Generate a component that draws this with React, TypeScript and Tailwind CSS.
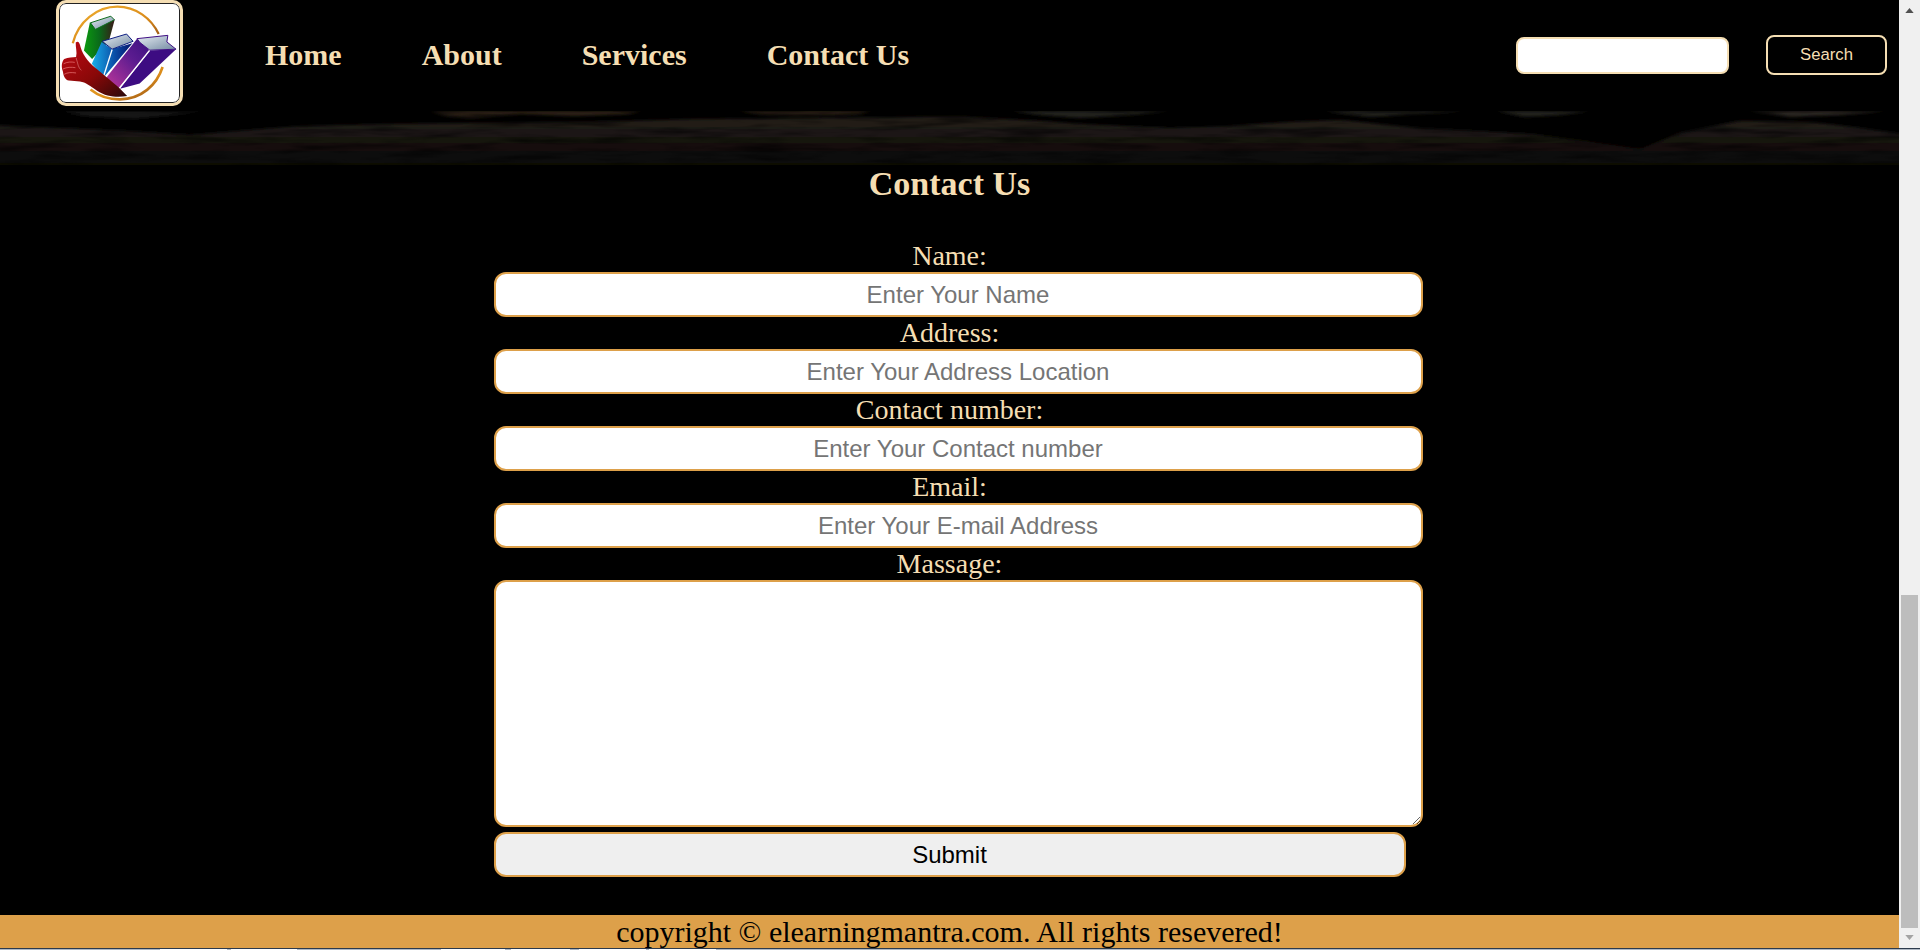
import React from "react";

function Logo() {
  return (
    <svg viewBox="57 9 363 297" className="block w-full h-full" preserveAspectRatio="none">
      <defs>
        <linearGradient id="ring" x1="0" y1="0" x2="1" y2="1">
          <stop offset="0" stopColor="#f0b030" />
          <stop offset="0.6" stopColor="#d98a1a" />
          <stop offset="1" stopColor="#8a4a14" />
        </linearGradient>
        <linearGradient id="green" x1="0" y1="0" x2="1" y2="0">
          <stop offset="0" stopColor="#0c9a10" />
          <stop offset="0.5" stopColor="#0a6a1a" />
          <stop offset="1" stopColor="#3a1818" />
        </linearGradient>
        <linearGradient id="blue" x1="0" y1="0" x2="1" y2="0">
          <stop offset="0" stopColor="#18aeea" />
          <stop offset="0.55" stopColor="#0a50a8" />
          <stop offset="1" stopColor="#04106a" />
        </linearGradient>
        <linearGradient id="mag" x1="0" y1="1" x2="1" y2="0">
          <stop offset="0" stopColor="#c0389a" />
          <stop offset="0.6" stopColor="#5c1c90" />
          <stop offset="1" stopColor="#3a1080" />
        </linearGradient>
        <linearGradient id="page" x1="0" y1="0" x2="1" y2="1">
          <stop offset="0" stopColor="#e8eef4" />
          <stop offset="1" stopColor="#7088a0" />
        </linearGradient>
        <linearGradient id="hand" x1="0" y1="0" x2="1" y2="1">
          <stop offset="0" stopColor="#c00a14" />
          <stop offset="0.55" stopColor="#8a0808" />
          <stop offset="1" stopColor="#2a0a0a" />
        </linearGradient>
      </defs>
      <path d="M96 128C112 62 170 17 232 17C288 17 335 52 358 100" fill="none" stroke="url(#ring)" strokeWidth="7" />
      <path d="M370 200C352 255 305 297 240 298C205 298 175 288 150 268" fill="none" stroke="url(#ring)" strokeWidth="8" />
      <path d="M148 66L224 56L206 122L155 176L130 150Z" fill="url(#green)" />
      <path d="M150 66L212 46L223 57L165 86Z" fill="url(#page)" stroke="#0a6a1a" strokeWidth="3" />
      <path d="M184 124L154 190L190 232L278 128L215 145Z" fill="url(#blue)" />
      <path d="M186 122L260 100L280 122L216 146Z" fill="url(#page)" stroke="#0a1a80" strokeWidth="3" />
      <path d="M216 147L190 228" stroke="#ffffff" strokeWidth="4" fill="none" />
      <path d="M292 114L195 236L236 264L330 150Z" fill="url(#mag)" />
      <path d="M331 150L411 146L300 250L240 266Z" fill="#3d0c82" />
      <path d="M292 114L386 104L383 124L411 146L331 149L301 126Z" fill="url(#page)" stroke="#3d0c82" strokeWidth="3" />
      <path d="M330 150L238 264" stroke="#ffffff" strokeWidth="4" fill="none" />
      <path d="M105 126C112 120 116 124 120 140C128 168 150 192 172 208C200 232 240 262 262 288C235 292 200 292 170 272C150 258 135 246 118 244L84 241C72 238 68 228 66 214C60 200 62 184 70 176C82 170 96 172 106 170C110 155 104 140 105 126Z" fill="url(#hand)" />
      <path d="M68 190C80 184 92 184 102 186M66 206C78 200 92 200 104 202M70 222C80 216 92 216 106 218" fill="none" stroke="#f08080" strokeWidth="2" />
      <path d="M106 172C112 190 112 202 122 210" fill="none" stroke="#f0a0a0" strokeWidth="1.5" />
    </svg>
  );
}

function Band() {
  return (
    <svg viewBox="0 0 1899 54" preserveAspectRatio="none" className="block w-full h-full">
      <defs>
        <filter id="soft" x="-5%" y="-30%" width="110%" height="160%">
          <feGaussianBlur stdDeviation="3 1.5" />
        </filter>
        <filter id="grain" x="0" y="0" width="100%" height="100%">
          <feTurbulence type="fractalNoise" baseFrequency="0.015 0.12" numOctaves="3" seed="11" />
          <feColorMatrix values="0 0 0 0 0  0 0 0 0 0  0 0 0 0 0  1.4 0 0 0 -0.6" />
        </filter>
        <linearGradient id="fade" x1="0" y1="0" x2="0" y2="1">
          <stop offset="0" stopColor="#26211b" />
          <stop offset="0.5" stopColor="#15110e" />
          <stop offset="1" stopColor="#090504" />
        </linearGradient>
      </defs>
      <rect width="1899" height="54" fill="#000" />
      <g filter="url(#soft)">
        <path d="M-10 14L60 17L130 20L190 24L250 19L300 15L400 13L480 12L590 11L700 8L830 7L960 6L1040 10L1100 14L1170 17L1230 15L1290 11L1340 9L1420 17L1530 23L1590 31L1640 38L1680 22L1740 10L1810 11L1860 17L1910 24V60H-10Z" fill="url(#fade)" />
        <path d="M432 0H640L628 3L575 5L520 3L470 7L446 5Z" fill="#2e2418" />
        <path d="M740 0H870L858 3L800 5L765 4Z" fill="#2e2418" />
        <path d="M62 0H205L170 4L130 8L85 5Z" fill="#191919" />
        <path d="M1012 0H1170L1130 4L1080 7L1040 4Z" fill="#24221e" />
        <path d="M1325 0H1465L1420 3L1370 6L1345 3Z" fill="#24221e" />
        <path d="M1497 0H1590L1560 4L1525 6Z" fill="#24221e" />
        <path d="M1750 0H1885L1840 4L1790 6Z" fill="#2c2820" />
      </g>
      <rect width="1899" height="54" filter="url(#grain)" />
    </svg>
  );
}

function Field({ label, placeholder }: { label: string; placeholder: string }) {
  return (
    <>
      <label className="block h-8 text-[28px] leading-8 text-[#f5deb3] text-center">{label}</label>
      <input
        type="text"
        placeholder={placeholder}
        className="block w-[929px] h-[45px] bg-white border-2 border-[#dda04a] rounded-xl text-center text-[24px] text-black placeholder:text-[#757575] font-['Liberation_Sans',Arial,sans-serif] outline-none"
      />
    </>
  );
}

export default function App() {
  return (
    <div className="w-[1920px] h-[950px] overflow-hidden flex flex-col bg-black font-['Liberation_Serif','Times_New_Roman',serif]">
      <div className="flex flex-1 min-h-0">
        <div className="w-[1899px] flex flex-col">
          <header className="h-[111px] flex items-start">
            <div className="ml-[56px] w-[127px] h-[106px] border-[3px] border-[#f5deb3] rounded-[10px] overflow-hidden bg-white">
              <div className="w-full h-full border border-[#222] rounded-[7px] overflow-hidden">
                <Logo />
              </div>
            </div>
            <nav className="ml-[82px] mt-[37px] flex gap-[80px] text-[30px] leading-[36px] font-bold text-[#f5deb3]">
              <a>Home</a>
              <a>About</a>
              <a>Services</a>
              <a>Contact Us</a>
            </nav>
            <div className="ml-auto mr-[12px] mt-[35px] flex items-center gap-[37px]">
              <input className="w-[213px] h-[37px] bg-white border-2 border-[#f5deb3] rounded-lg outline-none" />
              <button className="w-[121px] h-[40px] border-2 border-[#f5deb3] rounded-lg text-[16.7px] text-[#f5deb3] font-['Liberation_Sans',Arial,sans-serif]">
                Search
              </button>
            </div>
          </header>
          <div className="h-[54px]">
            <Band />
          </div>
          <h2 className="h-[37px] text-[34px] leading-[37px] font-bold text-[#f5deb3] text-center">Contact Us</h2>
          <form className="w-[912px] mx-auto mt-[38px]">
            <Field label="Name:" placeholder="Enter Your Name" />
            <Field label="Address:" placeholder="Enter Your Address Location" />
            <Field label="Contact number:" placeholder="Enter Your Contact number" />
            <Field label="Email:" placeholder="Enter Your E-mail Address" />
            <label className="block h-8 text-[28px] leading-8 text-[#f5deb3] text-center">Massage:</label>
            <textarea className="block w-[929px] h-[247px] bg-white border-2 border-[#dda04a] rounded-xl outline-none" />
            <button
              type="button"
              className="block w-[912px] h-[45px] mt-[5px] bg-[#efefef] border-2 border-[#dda04a] rounded-xl text-[24px] text-black font-['Liberation_Sans',Arial,sans-serif]"
            >
              Submit
            </button>
          </form>
          <footer className="mt-[38px] h-[33px] bg-[#dda04a] text-[30px] leading-[34px] text-black text-center overflow-hidden whitespace-nowrap">
            copyright © elearningmantra.com. All rights resevered!
          </footer>
        </div>
        <div className="w-[21px] bg-[#f0f0f0] flex flex-col items-center">
          <svg viewBox="0 0 10 6" className="w-[9px] h-[5px] mt-[8px] shrink-0"><path d="M5 0L10 6H0Z" fill="#505050" /></svg>
          <div className="w-[17px] h-[333px] mt-[582px] bg-[#bdbdbd]" />
          <svg viewBox="0 0 10 6" className="w-[9px] h-[5px] mt-[7px] shrink-0"><path d="M0 0H10L5 6Z" fill="#a3a3a3" /></svg>
        </div>
      </div>
      <div className="h-[2px] border-t border-[#2c3a4c] bg-[#aeb8c4] flex">
        <div className="w-[160px]" />
        <div className="w-[67px] bg-white" />
        <div className="w-[4px]" />
        <div className="w-[66px] bg-white" />
        <div className="w-[144px]" />
        <div className="w-[64px] bg-white" />
        <div className="w-[6px]" />
        <div className="w-[59px] bg-white" />
        <div className="w-[9px]" />
        <div className="w-[67px] bg-white" />
        <div className="w-[3px]" />
        <div className="w-[67px] bg-white" />
      </div>
    </div>
  );
}
